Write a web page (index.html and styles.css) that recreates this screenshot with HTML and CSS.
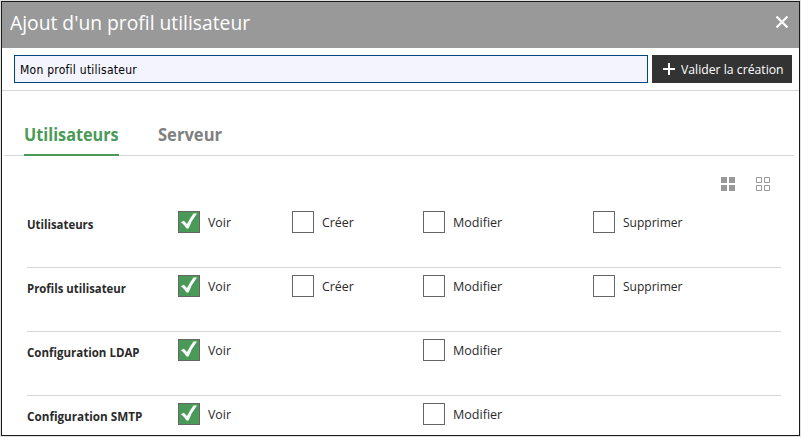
FILE: index.html
```
<!DOCTYPE html>
<html lang="fr">
<head>
<meta charset="utf-8">
<title>Ajout d'un profil utilisateur</title>
<link rel="stylesheet" href="styles.css">
</head>
<body>
<main class="dialog">
  <header class="header">
    <h1 class="title">Ajout d'un profil utilisateur</h1>
    <svg class="close" width="14" height="14" viewBox="0 0 14 14"><path d="M1.5 1.5 12.5 12.5M12.5 1.5 1.5 12.5"/></svg>
  </header>
  <div class="toolbar">
    <div class="name-field"><span>Mon profil utilisateur</span></div>
    <div class="submit">
      <svg width="12" height="12" viewBox="0 0 12 12"><path d="M6 0V12M0 6H12"/></svg>
      <span>Valider la création</span>
    </div>
  </div>
  <nav class="tabs">
    <span class="tab active"><span class="tab-users">Utilisateurs</span></span>
    <span class="tab"><span class="tab-server">Serveur</span></span>
  </nav>
  <div class="bulk">
    <svg class="all" width="14" height="14" viewBox="0 0 14 14"><path d="M0 0H6V6H0ZM8 0H14V6H8ZM0 8H6V14H0ZM8 8H14V14H8Z"/></svg>
    <svg class="none" width="14" height="14" viewBox="0 0 14 14"><path d="M.5 .5H5.5V5.5H.5ZM8.500 .5H13.5V5.5H8.500ZM.5 8.500H5.5V13.5H.5ZM8.500 8.500H13.5V13.5H8.500Z"/></svg>
  </div>
  <section class="rights">
    <div class="row">
      <b><span class="n-users">Utilisateurs</span></b>
      <label class="option"><i class="box on"><svg width="20" height="20" viewBox="0 0 20 20"><path d="M2 10.300 4.800 8.800 8 12Q11 6 14.500 1.500H18Q12.500 8.500 9.500 16.500H7.500Q5 12.500 2 10.300Z"/></svg></i><span class="voir">Voir</span></label>
      <label class="option"><i class="box"></i><span class="creer">Créer</span></label>
      <label class="option"><i class="box"></i><span class="modifier">Modifier</span></label>
      <label class="option"><i class="box"></i><span class="supprimer">Supprimer</span></label>
    </div>
    <div class="row">
      <b><span class="n-profiles">Profils utilisateur</span></b>
      <label class="option"><i class="box on"><svg width="20" height="20" viewBox="0 0 20 20"><path d="M2 10.300 4.800 8.800 8 12Q11 6 14.500 1.500H18Q12.500 8.500 9.500 16.500H7.500Q5 12.500 2 10.300Z"/></svg></i><span class="voir">Voir</span></label>
      <label class="option"><i class="box"></i><span class="creer">Créer</span></label>
      <label class="option"><i class="box"></i><span class="modifier">Modifier</span></label>
      <label class="option"><i class="box"></i><span class="supprimer">Supprimer</span></label>
    </div>
    <div class="row">
      <b><span class="n-ldap">Configuration LDAP</span></b>
      <label class="option"><i class="box on"><svg width="20" height="20" viewBox="0 0 20 20"><path d="M2 10.300 4.800 8.800 8 12Q11 6 14.500 1.500H18Q12.500 8.500 9.500 16.500H7.500Q5 12.500 2 10.300Z"/></svg></i><span class="voir">Voir</span></label>
      <span></span>
      <label class="option"><i class="box"></i><span class="modifier">Modifier</span></label>
    </div>
    <div class="row">
      <b><span class="n-smtp">Configuration SMTP</span></b>
      <label class="option"><i class="box on"><svg width="20" height="20" viewBox="0 0 20 20"><path d="M2 10.300 4.800 8.800 8 12Q11 6 14.500 1.500H18Q12.500 8.500 9.500 16.500H7.500Q5 12.500 2 10.300Z"/></svg></i><span class="voir">Voir</span></label>
      <span></span>
      <label class="option"><i class="box"></i><span class="modifier">Modifier</span></label>
    </div>
  </section>
</main>
</body>
</html>
```
FILE: styles.css
```
* { box-sizing: border-box; }
body { margin: 0; background: #e0e2e0; font: 13px/20px "Open Sans", "Noto Sans", sans-serif; color: #2a2a2a; overflow: hidden; }
svg { display: block; flex: none; }
span { white-space: nowrap; }
.dialog { width: 799px; height: 435px; margin: 1px; border: 1px solid #1b1b1b; background: #fff; overflow: hidden; }
.header { height: 46px; background: #999; display: flex; justify-content: space-between; align-items: flex-start; padding: 7px 10px 0 8px; }
.title { margin: 0; font-size: 20px; line-height: 28px; font-weight: 400; color: #fff; white-space: nowrap; transform: scaleX(.964); transform-origin: left; }
.close { margin-top: 6px; fill: none; stroke: #fff; stroke-width: 2.2; }
.toolbar { height: 43px; border-bottom: 1px solid #d6d6d6; padding: 7px 6px 0 12px; display: flex; gap: 4px; }
.name-field { width: 634px; height: 28px; border: 1px solid #00457c; background: #f4f4ff; color: #000; padding: 0 5px; font: 12px/28px "DejaVu Sans Condensed", "DejaVu Sans", sans-serif; letter-spacing: .25px; }
.submit { width: 140px; height: 28px; background: #333; color: #fff; display: flex; align-items: center; padding-left: 11px; gap: 6px; }
.submit span { margin-top: -1px; transform: scaleX(.94); transform-origin: left; }
.submit svg { stroke: #fff; stroke-width: 2; }
.tabs { height: 65px; margin: 0 5px 0 2px; padding: 29px 20px 0; display: flex; gap: 39px; border-bottom: 1px solid #d6d6d6; color: #808080; font-size: 18px; font-weight: 700; line-height: 28px; }
.tab { height: 36px; }
.active { width: 95px; color: #4a9a57; border-bottom: 2px solid #4a9a57; }
.bulk { display: flex; justify-content: flex-end; gap: 21px; padding: 21px 29px 0 0; height: 48px; }
.all { fill: #999; }
.none { fill: none; stroke: #999; }
.rights { margin: 0 18px 0 25px; }
.row { height: 64px; border-bottom: 1px solid #d6d6d6; display: grid; grid-template-columns: 151px 114px 131px 170px 1fr; align-items: start; padding-top: 7px; }
.row b { padding-top: 3px; font-weight: 700; }
.option { display: flex; gap: 8px; line-height: 22px; }
.box { width: 22px; height: 22px; border: 1px solid #666; flex: none; }
.on { background: #4a9a57; }
.on svg { fill: #fff; }
.tab span, .row b span, .option span { display: inline-block; transform-origin: left; }
.tab .tab-users { transform: scaleX(.9); }
.tab .tab-server { transform: scaleX(.92); }
.row .n-users, .row .n-profiles { transform: scaleX(.875); }
.row .n-ldap { transform: scaleX(.885); }
.row .n-smtp { transform: scaleX(.9); }
.option .voir, .option .creer { transform: scaleX(.95); }
.option .supprimer { transform: scaleX(.925); }
.option .modifier { transform: scaleX(.965); }
```
